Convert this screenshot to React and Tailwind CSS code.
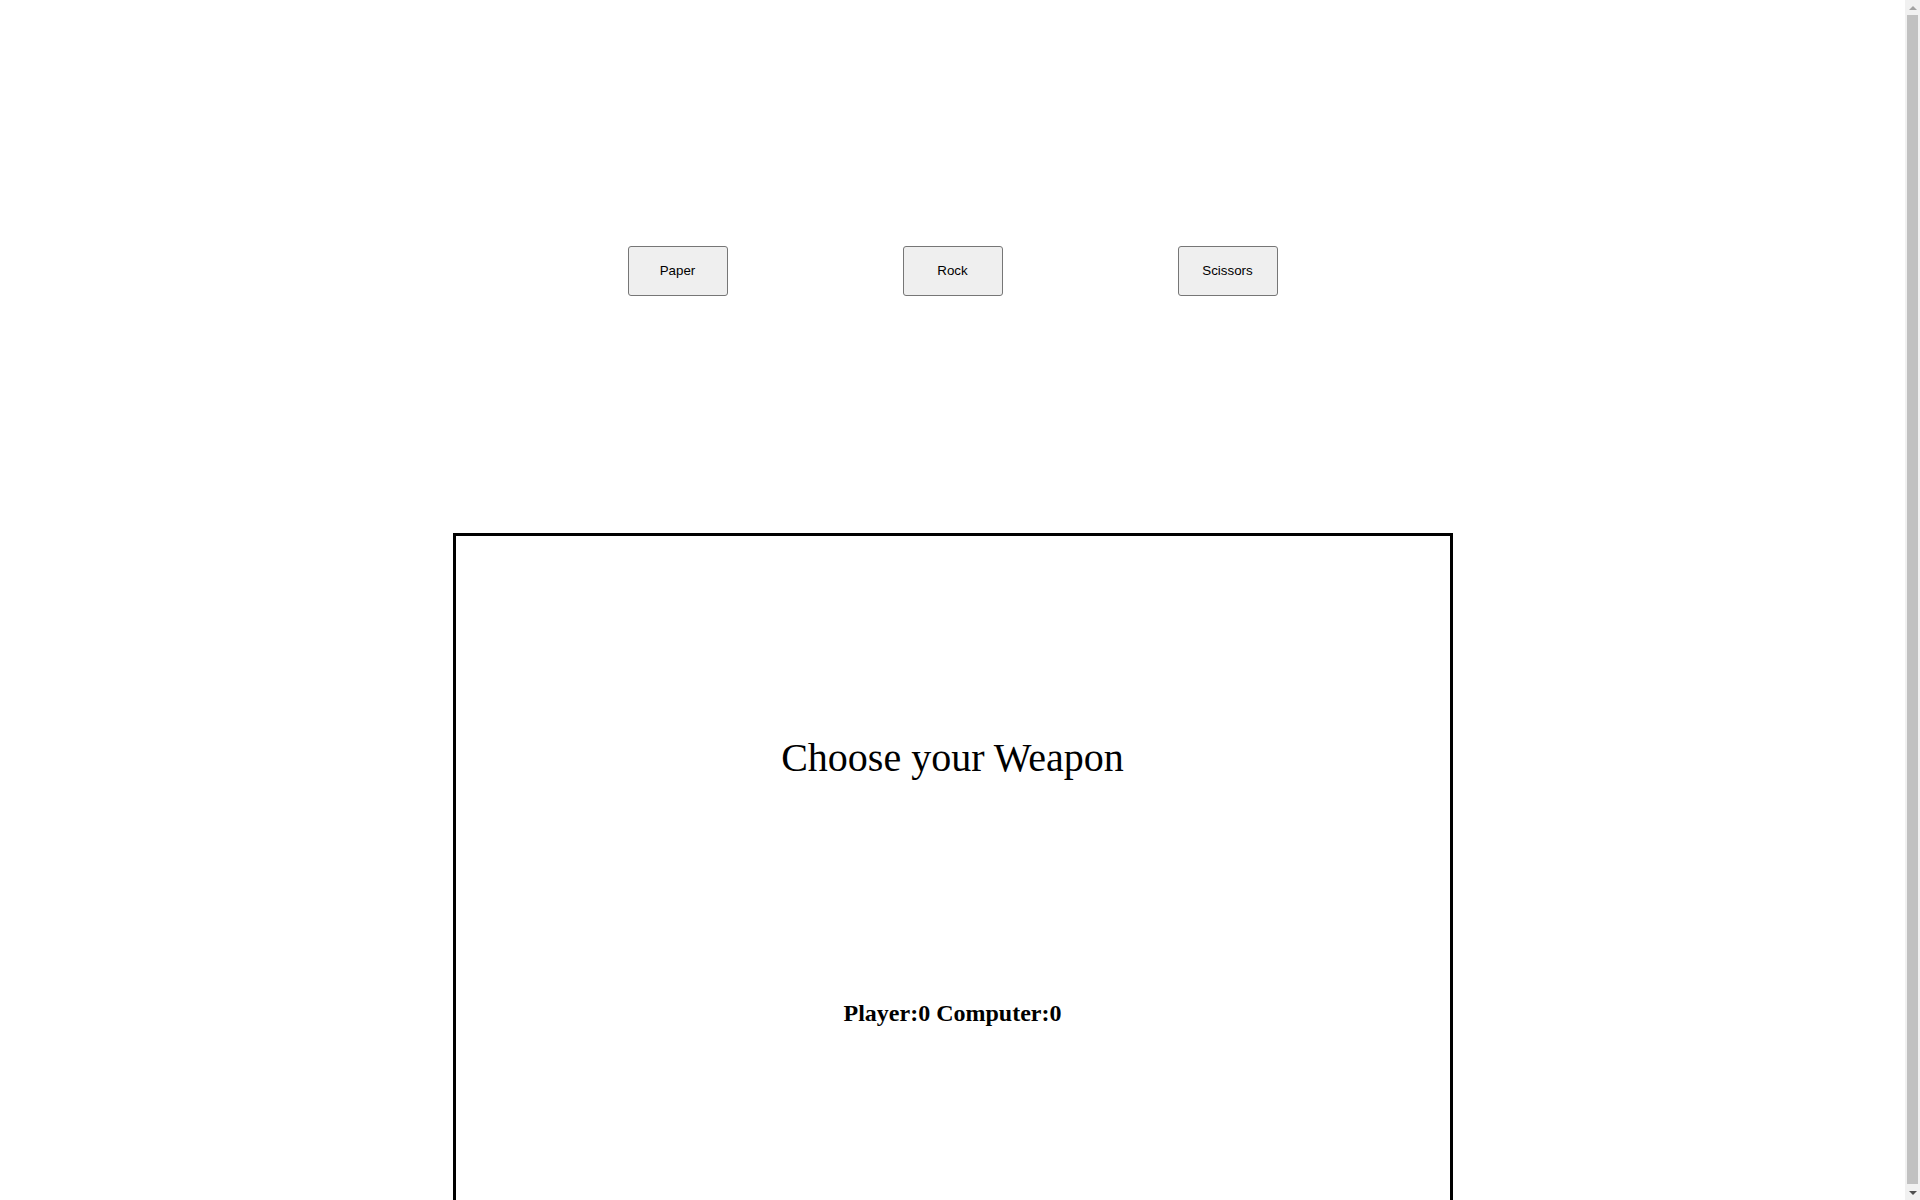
import React, { useState } from "react";

const weapons = ["Paper", "Rock", "Scissors"];

function ScrollBar() {
  return (
    <div className="fixed top-0 right-0 h-screen w-[15px] bg-[#f1f1f1] flex flex-col items-center">
      <div className="h-[15px] flex items-center justify-center">
        <div className="w-0 h-0 border-l-[4px] border-r-[4px] border-b-[4px] border-l-transparent border-r-transparent border-b-[#a3a3a3]" />
      </div>
      <div className="flex-1 w-[11px] bg-[#c1c1c1] mb-[1px]" />
      <div className="h-[15px] flex items-center justify-center">
        <div className="w-0 h-0 border-l-[4px] border-r-[4px] border-t-[4px] border-l-transparent border-r-transparent border-t-[#505050]" />
      </div>
    </div>
  );
}

export default function App() {
  const [score, setScore] = useState({ player: 0, computer: 0 });
  const [message, setMessage] = useState("Choose your Weapon");

  const play = (choice) => {
    const cpu = weapons[Math.floor(Math.random() * 3)];
    const beats = { Paper: "Rock", Rock: "Scissors", Scissors: "Paper" };
    if (cpu === choice) {
      setMessage(`Tie! Both chose ${choice}`);
    } else if (beats[choice] === cpu) {
      setMessage(`${choice} beats ${cpu}`);
      setScore((s) => ({ ...s, player: s.player + 1 }));
    } else {
      setMessage(`${cpu} beats ${choice}`);
      setScore((s) => ({ ...s, computer: s.computer + 1 }));
    }
  };

  return (
    <div className="min-h-[1217px] bg-white text-black pr-[15px] font-['Liberation_Serif',serif]">
      {/* weapon buttons */}
      <div className="flex justify-center gap-[175px] pt-[246px]">
        {weapons.map((w) => (
          <button
            key={w}
            onClick={() => play(w)}
            className="w-[100px] h-[50px] bg-[#efefef] border border-[#767676] rounded-[3px] text-[13.33px] font-['Liberation_Sans',Arial,sans-serif] text-black hover:bg-[#e5e5e5]"
          >
            {w}
          </button>
        ))}
      </div>

      {/* result panel */}
      <div className="mx-auto mt-[237px] w-[1000px] h-[684px] border-[3px] border-black flex flex-col items-center pt-[199px]">
        <h1 className="text-[40px] leading-[46px]">{message}</h1>
        <h2 className="mt-[218px] text-[24px] leading-[28px] font-bold">
          Player:{score.player} Computer:{score.computer}
        </h2>
      </div>

      <ScrollBar />
    </div>
  );
}
